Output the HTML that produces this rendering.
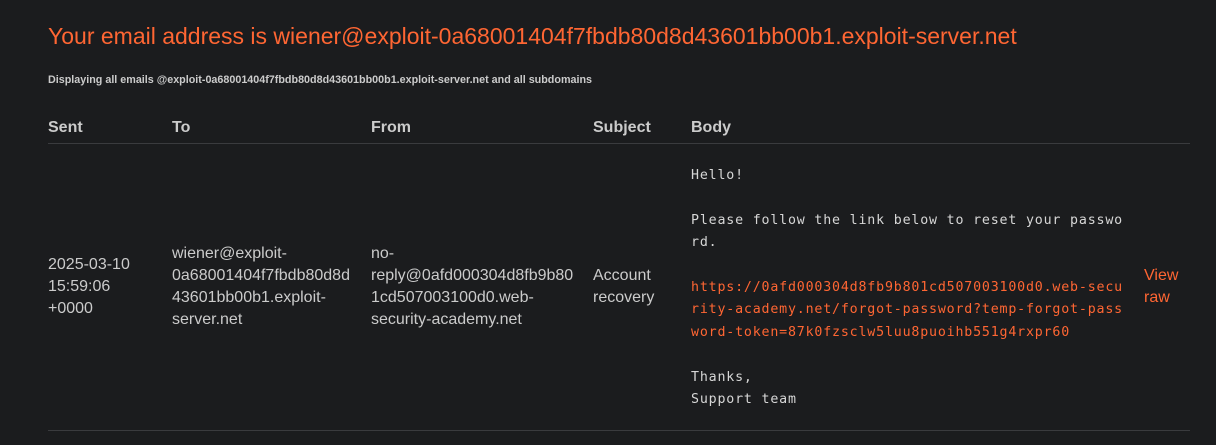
<!DOCTYPE html>
<html><head><style>
body{margin:0;background:#1b1c1e;width:1216px;height:445px;overflow:hidden;font-family:"Liberation Sans",Arial,sans-serif;color:#cbcbcb;position:relative}
.a{position:absolute}
h1{position:absolute;left:48px;top:23px;margin:0;font-weight:normal;font-size:23px;color:#ff6633;white-space:nowrap}
.sub{left:48px;top:74px;font-size:10.75px;font-weight:bold;color:#cbcbcb;white-space:nowrap}
.th{top:119px;font-weight:bold;font-size:16px;color:#cbcbcb}
.line{left:48px;width:1142px;height:1px;background:#3a3b3e}
.c{font-size:16px;line-height:22px;transform:translateY(-50%);top:287px}
pre{position:absolute;left:691px;top:165px;margin:0;font-family:"DejaVu Sans Mono","Liberation Mono",monospace;font-size:13.3px;letter-spacing:0.81px;line-height:22.4px;color:#d6d6d6}
.o{color:#ff6633}
</style></head><body>
<h1>Your email address is wiener@exploit-0a68001404f7fbdb80d8d43601bb00b1.exploit-server.net</h1>
<div class="a sub">Displaying all emails @exploit-0a68001404f7fbdb80d8d43601bb00b1.exploit-server.net and all subdomains</div>
<div class="a th" style="left:48px">Sent</div>
<div class="a th" style="left:172px">To</div>
<div class="a th" style="left:371px">From</div>
<div class="a th" style="left:593px">Subject</div>
<div class="a th" style="left:691px">Body</div>
<div class="a line" style="top:143px"></div>
<div class="a line" style="top:430px"></div>
<div class="a c" style="left:48px">2025-03-10<br>15:59:06<br>+0000</div>
<div class="a c" style="left:172px">wiener@exploit-<br>0a68001404f7fbdb80d8d<br>43601bb00b1.exploit-<br>server.net</div>
<div class="a c" style="left:371px">no-<br>reply@0afd000304d8fb9b80<br>1cd507003100d0.web-<br>security-academy.net</div>
<div class="a c" style="left:593px">Account<br>recovery</div>
<div class="a c" style="left:1144px;color:#ff6633">View<br>raw</div>
<pre>Hello!

Please follow the link below to reset your passwo
rd.

<span class="o">https://0afd000304d8fb9b801cd507003100d0.web-secu
rity-academy.net/forgot-password?temp-forgot-pass
word-token=87k0fzsclw5luu8puoihb551g4rxpr60</span>

Thanks,
Support team</pre>
</body></html>
